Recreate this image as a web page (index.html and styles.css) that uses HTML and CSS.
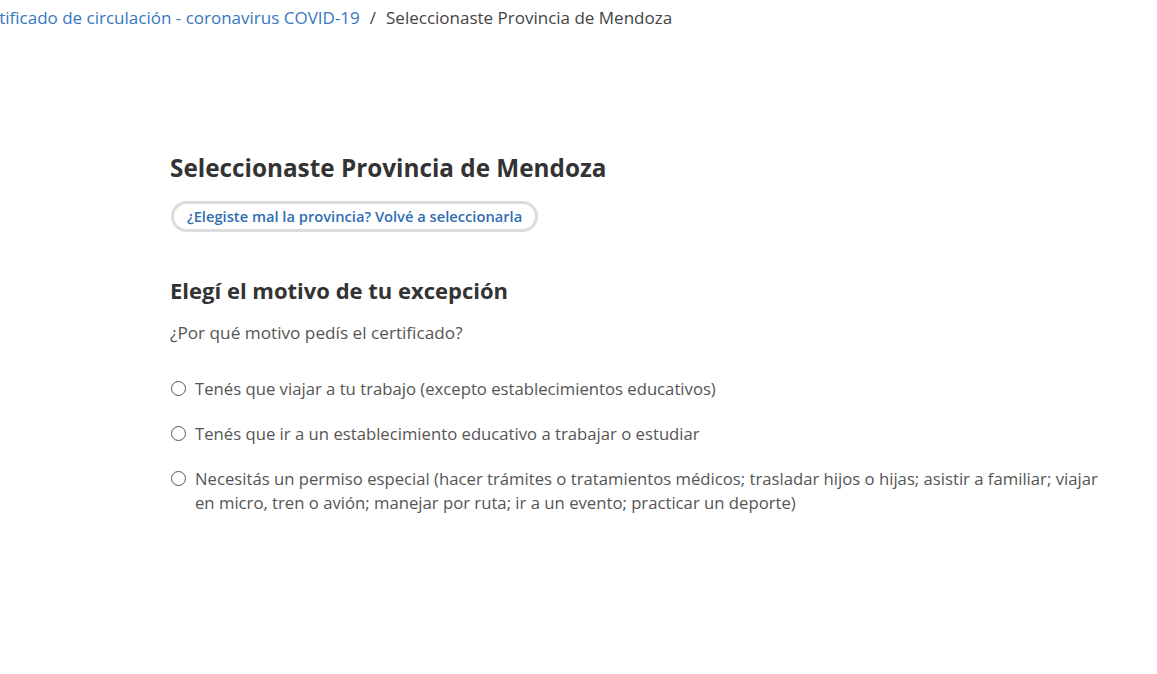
FILE: index.html
```html
<!DOCTYPE html>
<html lang="es">
<head>
<meta charset="utf-8">
<title>Certificado de circulación</title>
<link rel="stylesheet" href="styles.css">
</head>
<body>
<nav class="crumbs">
  <a class="crumb-link" href="#">Certificado de circulación - coronavirus COVID-19</a>
  <span class="crumb-sep">/</span>
  <span class="crumb-current">Seleccionaste Provincia de Mendoza</span>
</nav>
<main class="content">
  <h1 class="title">Seleccionaste Provincia de Mendoza</h1>
  <a class="pill" href="#">¿Elegiste mal la provincia? Volvé a seleccionarla</a>
  <h2 class="subtitle">Elegí el motivo de tu excepción</h2>
  <p class="question">¿Por qué motivo pedís el certificado?</p>
  <div class="options">
    <label class="option"><span class="radio"></span><span class="opt-text">Tenés que viajar a tu trabajo (excepto establecimientos educativos)</span></label>
    <label class="option"><span class="radio"></span><span class="opt-text">Tenés que ir a un establecimiento educativo a trabajar o estudiar</span></label>
    <label class="option"><span class="radio"></span><span class="opt-text">Necesitás un permiso especial (hacer trámites o tratamientos médicos; trasladar hijos o hijas; asistir a familiar; viajar en micro, tren o avión; manejar por ruta; ir a un evento; practicar un deporte)</span></label>
  </div>
</main>
</body>
</html>
```
FILE: styles.css
```css
html, body {
  margin: 0;
  padding: 0;
  background: #fff;
  overflow: hidden;
}
body {
  font-family: "Open Sans", "Noto Sans", sans-serif;
  color: #555;
}
.crumbs {
  display: flex;
  align-items: baseline;
  gap: 10px;
  margin-left: -28px;
  padding-top: 6px;
  font-size: 17px;
  white-space: nowrap;
}
.crumb-link {
  color: #3677c0;
  text-decoration: none;
}
.crumb-sep {
  color: #444;
}
.crumb-current {
  color: #444;
}
.content {
  padding-left: 170px;
  padding-top: 123px;
  width: 930px;
}
.title {
  margin: 0;
  font-size: 24.3px;
  font-weight: 700;
  color: #333;
  line-height: 32px;
}
.pill {
  display: inline-block;
  margin-top: 17px;
  margin-left: 1px;
  padding: 3px 13px;
  border: 3px solid #dcdcdc;
  border-radius: 20px;
  color: #2f6db3;
  font-size: 14.7px;
  font-weight: 600;
  text-decoration: none;
  line-height: 19px;
}
.subtitle {
  margin: 43px 0 0;
  font-size: 22px;
  font-weight: 700;
  color: #333;
  line-height: 30px;
}
.question {
  margin: 17px 0 0;
  font-size: 17.2px;
  line-height: 22px;
  color: #555;
}
.options {
  display: flex;
  flex-direction: column;
  gap: 21px;
  margin-top: 33px;
}
.option {
  display: flex;
  align-items: flex-start;
  gap: 9px;
  font-size: 16.7px;
  line-height: 24px;
  color: #555;
}
.radio {
  flex: none;
  width: 13px;
  height: 13px;
  margin-top: 4px;
  margin-left: 1px;
  border: 1.3px solid #555;
  border-radius: 50%;
}
.opt-text {
  flex: 1;
}
```
